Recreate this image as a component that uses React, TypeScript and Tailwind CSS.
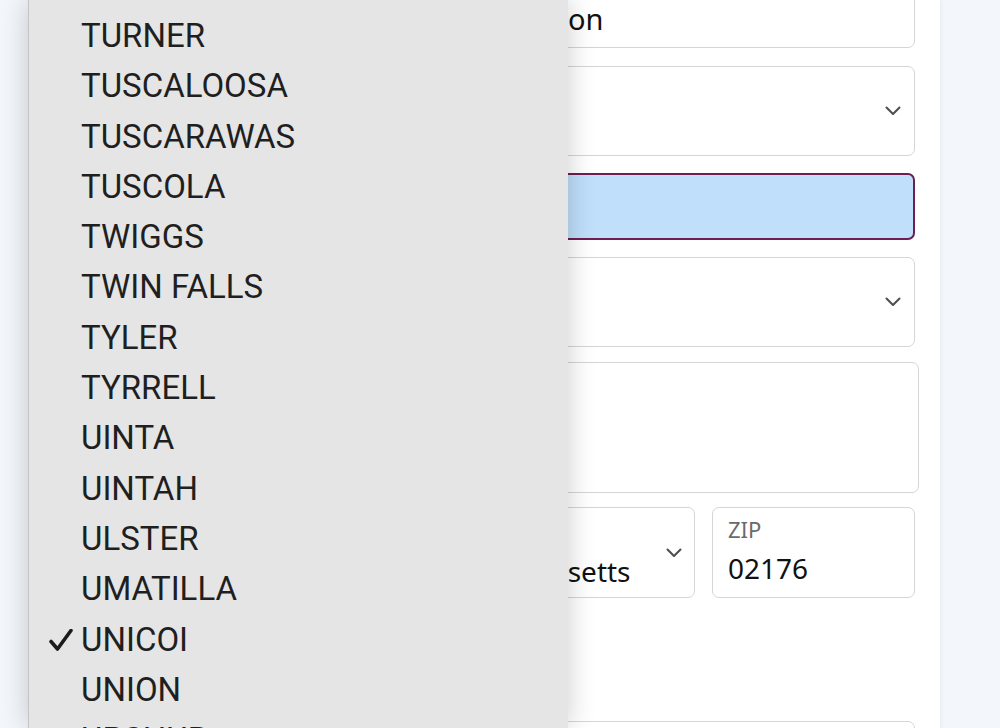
import React from "react";

const counties = [
  "TURNER",
  "TUSCALOOSA",
  "TUSCARAWAS",
  "TUSCOLA",
  "TWIGGS",
  "TWIN FALLS",
  "TYLER",
  "TYRRELL",
  "UINTA",
  "UINTAH",
  "ULSTER",
  "UMATILLA",
  "UNICOI",
  "UNION",
  "UPSHUR",
];

function Chevron() {
  return (
    <svg width="16" height="10" viewBox="0 0 16 10" fill="none">
      <polyline points="1.5,1.5 8,8 14.5,1.5" stroke="#505050" strokeWidth="2.1" strokeLinecap="round" strokeLinejoin="round" />
    </svg>
  );
}

function Check() {
  return (
    <svg width="24" height="22" viewBox="0 0 24 22" fill="none">
      <path d="M2 12.5 L8.5 20 L22 1.5" stroke="#1c1c1c" strokeWidth="3.6" strokeLinecap="round" strokeLinejoin="round" />
    </svg>
  );
}

function Field({ label, value, className = "", valueSize = "text-[28px]" }: { label: string; value: string; className?: string; valueSize?: string }) {
  return (
    <div className={"shrink-0 h-[90px] flex flex-col rounded-[7px] border-[1.5px] border-[#d5d5d5] bg-white px-[15px] pt-[7.5px] " + className}>
      <div className="text-[22px] leading-[26px] text-[#6b6b6b]">{label}</div>
      <div className={"mt-[9px] leading-[34px] text-[#111111] whitespace-nowrap " + valueSize}>{value}</div>
    </div>
  );
}

export default function App() {
  return (
    <div className="relative w-[1000px] h-[728px] overflow-hidden bg-[#f3f6fa]" style={{ fontFamily: '"Noto Sans", "Liberation Sans", sans-serif' }}>
      {/* Form card */}
      <div className="ml-[40px] w-[900px] min-h-[800px] bg-white shadow-[0_0_5px_rgba(0,0,0,0.08)] pl-[123px] pr-[25px] flex flex-col">
        <Field label="Organization" value="Melrose Historical Preservation" valueSize="text-[29px]" className="-mt-[42px]" />

        <div className="shrink-0 mt-[18px] h-[90px] rounded-[7px] border-[1.5px] border-[#d5d5d5] bg-white flex items-center justify-end pr-[13px]">
          <Chevron />
        </div>

        <div className="shrink-0 mt-[17px] h-[67px] rounded-[7px] border-2 border-[#6d1e52] bg-[#bfdffb]" />

        <div className="shrink-0 mt-[17px] h-[90px] rounded-[7px] border-[1.5px] border-[#d5d5d5] bg-white flex items-center justify-end pr-[13px]">
          <Chevron />
        </div>

        <div className="shrink-0 mt-[15px] h-[131px] -mr-[4px] rounded-[7px] border-[1.5px] border-[#d5d5d5] bg-white" />

        <div className="shrink-0 mt-[14px] flex gap-[17px]">
          <Field label="City" value="Melrose" className="flex-1 h-[91px]" />
          <div className="shrink-0 w-[275px] h-[91px] rounded-[7px] border-[1.5px] border-[#d5d5d5] bg-white flex items-center pl-[15px] pr-[12px]">
            <div className="flex-1 flex flex-col pt-[2px]">
              <div className="text-[22px] leading-[26px] text-[#6b6b6b]">State</div>
              <div className="mt-[9px] text-[28px] leading-[34px] text-[#111111]">Massachusetts</div>
            </div>
            <Chevron />
          </div>
          <Field label="ZIP" value="02176" className="w-[203px] h-[91px]" />
        </div>

        <div className="shrink-0 mt-[123px] h-[90px] rounded-[7px] border-[1.5px] border-[#d5d5d5] bg-white" />
      </div>

      {/* Open dropdown menu */}
      <div
        className="absolute left-[28px] top-0 w-[540px] h-[728px] bg-[#e5e5e5] border-l border-[#c4c4c4] shadow-[0_0_26px_rgba(0,0,0,0.2)] pt-[11px]"
        style={{ fontFamily: 'Roboto, "Liberation Sans", sans-serif' }}
      >
        {counties.map((c) => (
          <div key={c} className="flex items-center h-[50.3px]">
            <div className="ml-[20px] w-[24px] flex items-center justify-center">{c === "UNICOI" ? <Check /> : null}</div>
            <div className="ml-[8px] text-[33px] leading-[50.3px] text-[#1f1f1f] whitespace-nowrap">{c}</div>
          </div>
        ))}
      </div>
    </div>
  );
}
